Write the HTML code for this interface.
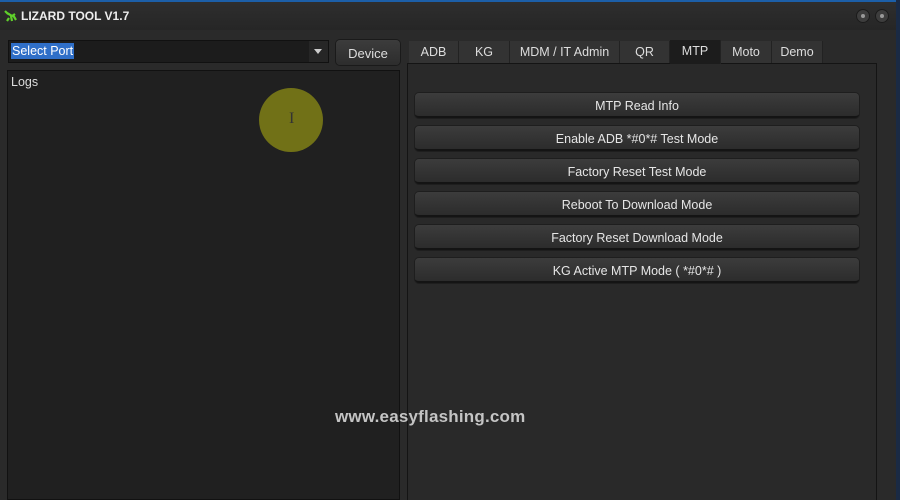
<!DOCTYPE html>
<html><head><style>
*{margin:0;padding:0;box-sizing:border-box}
body{width:900px;height:500px;overflow:hidden;background:#2a2a2a;font-family:"Liberation Sans",sans-serif;color:#ddd;position:relative}
.abs{position:absolute}
.btn{position:absolute;left:415px;width:444px;height:25px;border-radius:4px;background:linear-gradient(#3c3c3c,#2c2c2c);border-bottom:2px solid #141414;box-shadow:0 0 0 1px #1e1e1e;font-size:12.5px;text-align:center;line-height:26px;color:#e6e6e6}
.tab{position:absolute;top:41px;height:22px;background:#333;border-right:1px solid #222;font-size:12.5px;text-align:center;line-height:22px;color:#ddd}
</style></head><body>
<div class="abs" style="left:0;top:0;width:900px;height:2px;background:#1c5fa8"></div>
<div class="abs" style="left:0;top:2px;width:900px;height:28px;background:linear-gradient(#2e2e2e,#262626)"></div>
<div class="abs" style="left:896px;top:0;width:4px;height:500px;background:#1a2a44"></div>
<svg class="abs" style="left:3px;top:9px" width="14" height="14" viewBox="0 0 14 14"><path d="M2 2l3 3 M4 4l5 3 3-2 M8 7l1 5 M6 9l-2 3 M10 6l3 5" stroke="#5fd02a" stroke-width="2.2" fill="none"/></svg>
<div class="abs" style="left:21px;top:9px;font-size:12px;font-weight:bold;color:#eee">LIZARD TOOL V1.7</div>
<div class="abs" style="left:856px;top:9px;width:14px;height:14px;border-radius:50%;background:#3d3d3d;box-shadow:inset 0 0 0 1px #1a1a1a"><div style="margin:5px;width:4px;height:4px;border-radius:50%;background:#999"></div></div>
<div class="abs" style="left:875px;top:9px;width:14px;height:14px;border-radius:50%;background:#3d3d3d;box-shadow:inset 0 0 0 1px #1a1a1a"><div style="margin:5px;width:4px;height:4px;border-radius:50%;background:#999"></div></div>
<div class="abs" style="left:8px;top:40px;width:321px;height:23px;background:#1c1c1c;border:1px solid #111"></div>
<div class="abs" style="left:11px;top:43px;height:16px;padding:0 1px;background:#2f6fc8;color:#fff;font-size:12.5px;line-height:16px">Select Port</div>
<div class="abs" style="left:309px;top:41px;width:19px;height:21px;background:#262626"></div>
<div class="abs" style="left:314px;top:49px;border:4px solid transparent;border-top:5px solid #ccc;border-bottom:0"></div>
<div class="abs" style="left:336px;top:40px;width:64px;height:25px;border-radius:4px;background:linear-gradient(#3c3c3c,#2d2d2d);box-shadow:0 0 0 1px #1a1a1a;font-size:13px;text-align:center;line-height:27px">Device</div>
<div class="abs" style="left:7px;top:70px;width:393px;height:430px;background:#202020;border:1px solid #111"></div>
<div class="abs" style="left:11px;top:75px;font-size:12.5px">Logs</div>
<div class="abs" style="left:259px;top:88px;width:64px;height:64px;border-radius:50%;background:rgba(140,140,20,0.75)"></div>
<div class="abs" style="left:289px;top:110px;font-size:16px;color:#333;font-family:'Liberation Serif',serif">I</div>
<div class="abs" style="left:407px;top:63px;width:470px;height:437px;background:#292929;border:1px solid #141414;border-bottom:0"></div>
<div class="tab" style="left:409px;width:50px">ADB</div>
<div class="tab" style="left:459px;width:51px">KG</div>
<div class="tab" style="left:510px;width:110px">MDM / IT Admin</div>
<div class="tab" style="left:620px;width:50px">QR</div>
<div class="tab" style="left:670px;width:51px;background:#1c1c1c;top:40px;height:24px">MTP</div>
<div class="tab" style="left:721px;width:51px">Moto</div>
<div class="tab" style="left:772px;width:51px">Demo</div>
<div class="btn" style="top:93px">MTP Read Info</div>
<div class="btn" style="top:126px">Enable ADB *#0*# Test Mode</div>
<div class="btn" style="top:159px">Factory Reset Test Mode</div>
<div class="btn" style="top:192px">Reboot To Download Mode</div>
<div class="btn" style="top:225px">Factory Reset Download Mode</div>
<div class="btn" style="top:258px">KG Active MTP Mode ( *#0*# )</div>
<div class="abs" style="left:335px;top:407px;font-size:17px;font-weight:bold;color:#c4c4c4;letter-spacing:0.2px">www.easyflashing.com</div>
</body></html>
